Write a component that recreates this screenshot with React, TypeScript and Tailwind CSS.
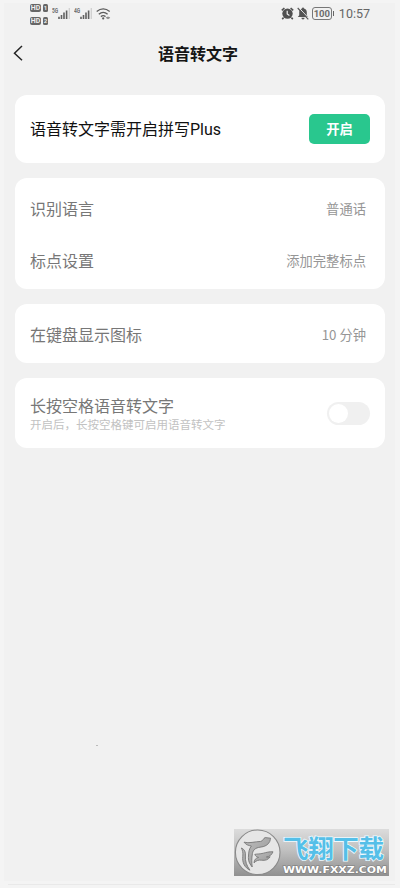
import type { ReactNode } from "react";

type RowProps = {
  label: string;
  value: string;
};

function Card({ className, children }: { className: string; children: ReactNode }) {
  return <section className={`rounded-xl bg-white px-[15px] ${className}`}>{children}</section>;
}

function Row({ label, value }: RowProps) {
  return (
    <div className="flex h-[52px] items-center justify-between pr-1">
      <span className="pb-[2px] text-base text-[#777]">{label}</span>
      <span className="text-[13.3px] text-[#969696]">{value}</span>
    </div>
  );
}

function HdBadge({ sim }: { sim: string }) {
  return (
    <div className="flex gap-[2px] font-['Roboto',sans-serif] text-[7px] font-bold leading-[8px] text-[#eee]">
      <span className="w-[11px] rounded-[2px] bg-[#666] text-center">HD</span>
      <span className="w-[5px] rounded-[1.5px] bg-[#666] text-center text-[6px]">{sim}</span>
    </div>
  );
}

function Signal({ net }: { net: string }) {
  return (
    <svg className="h-4 w-[19px]" viewBox="0 0 19 16">
      <text x="0" y="6.8" fontSize="6.5" fontFamily="Roboto, sans-serif" fontWeight="700" fill="#707070" textLength="6.2" lengthAdjust="spacingAndGlyphs">
        {net}
      </text>
      <path d="M7 13v-2.2M9.5 13v-4M12 13v-6.5M14.6 13v-8.5" stroke="#606060" strokeWidth="1.6" />
      <path d="M17.3 13v-11" stroke="#cfcfcf" strokeWidth="1.3" />
    </svg>
  );
}

function Wifi() {
  return (
    <svg className="h-4 w-4" viewBox="0 0 16 16" fill="none" stroke="#5c5c5c" strokeWidth="1.4">
      <path d="M.7 5.5Q7.2.3 13.7 5.5M2.8 8.2Q7.2 4.6 11.6 8.2M4.9 10.6Q7.2 8.7 9.5 10.6" />
      <circle cx="7.2" cy="12.4" r="1.1" fill="#5c5c5c" stroke="none" />
      <path d="M9.8 11.8l2-1.4v2.8zM12.2 10.4v2.8l2-1.4z" fill="#777" stroke="none" />
    </svg>
  );
}

function AlarmClock() {
  return (
    <svg className="h-[13px] w-[13px]" viewBox="0 0 13 13">
      <path d="M.8 3.3l2.6-2.3M12.2 3.3L9.6 1M2.6 10.6l-1.4 1.5M10.4 10.6l1.4 1.5" stroke="#505050" strokeWidth="1.6" />
      <circle cx="6.5" cy="6.6" r="5.2" fill="#505050" />
      <path d="M6.2 3.8v3.2l2.2 1.5" stroke="#f1f1f1" strokeWidth="1.2" fill="none" />
    </svg>
  );
}

function BellOff() {
  return (
    <svg className="h-[13px] w-3" viewBox="0 0 12 13">
      <path d="M.8 10L2.2 8.2V5.2C2.2 3.2 3.4 2 5 1.6a1 1 0 0 1 2 0C8.7 2 9.8 3.4 9.8 5.2V8.2l1.4 1.8zM4.4 10.8h3.2a1.6 1.6 0 0 1-3.2 0z" fill="#555" />
      <path d="M1.8.6l10 10.8" stroke="#f1f1f1" strokeWidth="1" />
      <path d="M.7 1l10.6 11.3" stroke="#555" strokeWidth="1.1" />
    </svg>
  );
}

function Battery() {
  return (
    <div className="flex items-center gap-px">
      <span className="flex h-[13px] w-[20px] items-center justify-center rounded-[3px] border border-[#777] font-['Roboto',sans-serif] text-[9.5px] font-bold leading-none text-[#6c6c6c]">
        100
      </span>
      <span className="h-[5px] w-px bg-[#666]" />
    </div>
  );
}

function StatusBar() {
  return (
    <div className="flex h-[22px] items-center justify-between pl-[26px] pr-[25px]">
      <div className="flex items-center">
        <div className="flex flex-col gap-[5px]">
          <HdBadge sim="1" />
          <HdBadge sim="2" />
        </div>
        <div className="ml-1 flex gap-[3px]">
          <Signal net="5G" />
          <Signal net="4G" />
          <Wifi />
        </div>
      </div>
      <div className="flex items-center pb-px">
        <AlarmClock />
        <div className="ml-[3px] mr-[3px] flex">
          <BellOff />
        </div>
        <Battery />
        <span className="ml-[5px] pt-px font-['Roboto',sans-serif] text-[12.5px] text-[#666]">10:57</span>
      </div>
    </div>
  );
}

function Watermark() {
  return (
    <svg className="absolute left-[234px] top-[829px] h-[47px] w-[155px]" viewBox="0 0 155 47">
      <defs>
        <linearGradient id="plate" x1="0" y1="0" x2="0" y2="1">
          <stop offset="0" stopColor="#dcdcdc" />
          <stop offset="0.45" stopColor="#c0c0c0" />
          <stop offset="1" stopColor="#909090" />
        </linearGradient>
        <linearGradient id="wing" x1="0" y1="0" x2="1" y2="1">
          <stop offset="0" stopColor="#bcbcbc" />
          <stop offset="1" stopColor="#979797" />
        </linearGradient>
      </defs>
      <rect width="155" height="47" fill="url(#plate)" />
      <circle cx="23.7" cy="23.3" r="22.3" fill="#e6e6e6" stroke="#8a8a8a" strokeWidth="1.1" />
      <g fill="url(#wing)" stroke="#777" strokeWidth="0.9" strokeLinejoin="round">
        <path d="M10 13.2C15 14.6 21 12.6 26.8 12.4c2.2-.2 2.4-3.2 4.4-3.8l5.4.6c-.5 1-.2 2-.8 3.2-1.6 3.6-5.2 5.4-9.8 5.8-4.6.6-7 2.8-7.6 6.4-.8 4.6-.8 9-.2 13.4-2-2.6-4-5.2-3.8-9.4.2-5.4.6-8.8 3-11.6-2.8-.4-5.6-1.4-7.4-3.8z" />
        <path d="M7.4 19c3.2 1.4 4.4 4 4 8-.4 5 1.2 9.8 4.6 14.2-5.4-2.6-8-7.6-7.2-14 .4-3.4-.2-5.8-1.4-8.2z" />
        <path d="M20.8 25.4c2.8-.6 5-.2 8.6-1.2 3.2-.8 5.6-1.6 9.6-1.4-1.4 3.2-3.4 4.8-6.6 5.2 1.4.4 2.6.2 3.8-.2-2 3-5 4-8.8 3.4-2.8-.4-5 .2-7.4 2.6.2-3 1.8-4.8 4.6-5.4-1.8-.4-3-1.2-3.8-3z" />
      </g>
      <text
        x="49"
        y="29"
        fontFamily="'Noto Sans CJK SC', sans-serif"
        fontSize="25.5"
        fontWeight="700"
        textLength="101"
        fill="#55bfe8"
        stroke="#eefaff"
        strokeWidth="1.6"
        paintOrder="stroke"
      >
        飞翔下载
      </text>
      <text
        x="49"
        y="43.5"
        fontFamily="'DejaVu Sans', sans-serif"
        fontSize="9.5"
        fontWeight="700"
        textLength="104"
        lengthAdjust="spacingAndGlyphs"
        fill="#fff"
        stroke="#7c7c7c"
        strokeWidth="1.2"
        paintOrder="stroke"
      >
        WWW.FXXZ.COM
      </text>
    </svg>
  );
}

export default function App() {
  return (
    <div className="relative flex h-[888px] w-[400px] flex-col overflow-hidden bg-[#f4f4f4] pl-1 pr-[5px] pt-[3px] font-['Noto_Sans_CJK_SC',sans-serif]">
      <main className="h-[878px] bg-[#f1f1f1]">
        <StatusBar />

        <header className="grid h-[57px] grid-cols-[40px_1fr_40px] items-center">
          <svg className="mb-[2px] ml-[9px] h-4 w-[10px]" viewBox="0 0 10 16" fill="none" stroke="#252525" strokeWidth="1.5">
            <path d="M9 1L1.5 8.2 9 15.2" />
          </svg>
          <h1 className="pb-[2px] pr-[3px] text-center text-base font-bold text-[#151515]">语音转文字</h1>
        </header>

        <div className="mt-[13px] flex flex-col gap-[15px] pl-[11px] pr-[10px]">
          <Card className="flex h-[68px] items-center justify-between">
            <span className="text-base text-[#111]">
              语音转文字需开启拼写<span className="font-['Roboto',sans-serif]">Plus</span>
            </span>
            <button className="h-[30px] w-[61px] rounded-[5px] bg-[#29c78e] text-[13.3px] font-bold text-white">开启</button>
          </Card>

          <Card className="h-[111px] pt-[5px]">
            <Row label="识别语言" value="普通话" />
            <Row label="标点设置" value="添加完整标点" />
          </Card>

          <Card className="h-[59px] pt-[5px]">
            <Row label="在键盘显示图标" value="10 分钟" />
          </Card>

          <Card className="flex h-[70px] items-center justify-between pt-px">
            <div className="flex flex-col">
              <span className="text-base leading-[22px] text-[#777]">长按空格语音转文字</span>
              <span className="text-[11.5px] leading-[17px] text-[#c2c2c2]">开启后，长按空格键可启用语音转文字</span>
            </div>
            <span className="flex h-[23px] w-[43px] items-center rounded-full bg-[#f0f0f0] px-[2px]">
              <span className="h-[19px] w-[19px] rounded-full bg-white" />
            </span>
          </Card>
        </div>
      </main>

      <div className="ml-1 mt-[3px] h-px shrink-0 bg-[#e9e9e9]" />

      <span className="absolute left-[96px] top-[745px] h-px w-[2px] bg-[#bbb]" />
      <Watermark />
    </div>
  );
}
